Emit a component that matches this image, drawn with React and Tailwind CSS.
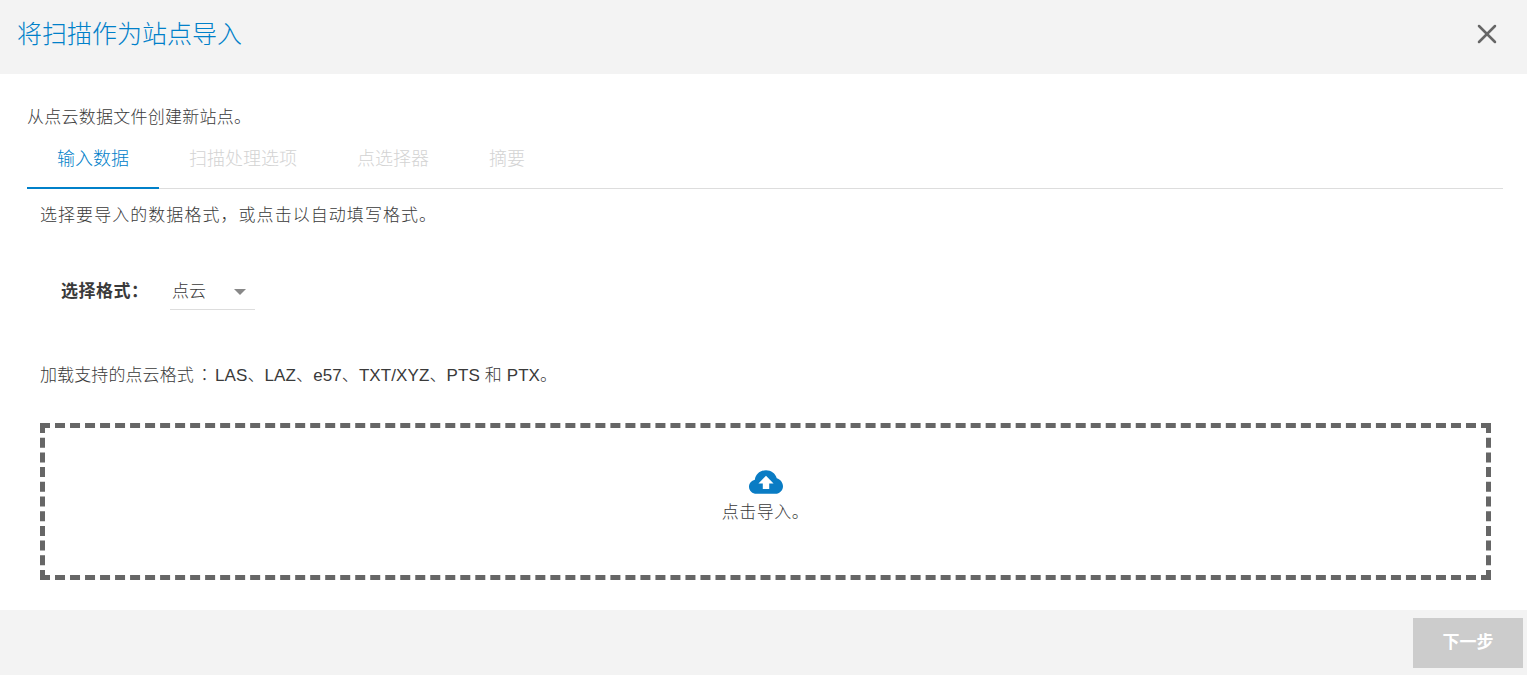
import { X } from 'lucide-react'

const FONT = "font-['Liberation_Sans','Noto_Sans_CJK_SC',sans-serif]"

function Tabs() {
  const tabs = ['输入数据', '扫描处理选项', '点选择器', '摘要']
  return (
    <div className="mt-[7px] flex border-b border-[#dddddd] h-[52px]">
      {tabs.map((t, i) => (
        <div
          key={t}
          className={`px-[30px] pt-[10px] text-[18px] leading-[25px] h-[52px] font-light ${i === 0 ? 'text-[#0080c9] border-b-2 border-[#0080c9]' : 'text-[#d3d3d3]'}`}
        >
          {t}
        </div>
      ))}
    </div>
  )
}

function CloudIcon() {
  return (
    <svg width="34" height="24" viewBox="0 0 36 25">
      <path
        fill="#0a7cc4"
        d="M8 25C3.600 25 0 21.600 0 17.400 0 13.800 2.600 10.800 6.200 10 7 4.400 11.800 0 18 0c5.400 0 10 3.400 11.400 8.400C33.200 9.400 36 13 36 17c0 4.400-3.600 8-8 8z"
      />
      <path fill="#ffffff" d="M18 6l8 8h-4.600v6h-6.800v-6H10z" />
    </svg>
  )
}

export default function App() {
  return (
    <div className={`h-[675px] flex flex-col bg-white text-[#3a3a3a] ${FONT}`}>
      <header className="h-[74px] shrink-0 bg-[#f3f3f3] flex items-center justify-between pl-[17px] pr-[24px] pb-[7px]">
        <h1 className="text-[25px] leading-[34px] text-[#0080c9] font-light">将扫描作为站点导入</h1>
        <X size={32} strokeWidth={1.9} className="text-[#666666]" />
      </header>

      <main className="flex-1 pl-[27px] pr-[24px]">
        <p className="mt-[32px] text-[17px] leading-[24px] tracking-[0.25px] font-light">从点云数据文件创建新站点。</p>
        <Tabs />
        <div className="pl-[13px] pr-[12px]">
          <p className="mt-[15px] text-[17px] leading-[24px] tracking-[1.05px] font-light">选择要导入的数据格式，或点击以自动填写格式。</p>

          <div className="mt-[46px] ml-[21px] flex items-start">
            <span className="text-[17px] leading-[36px] font-bold tracking-[0.5px] w-[109px]">选择格式：</span>
            <div className="w-[85px] h-[36px] border-b border-[#dddddd] flex items-center justify-between pl-[2px] pr-[9px]">
              <span className="text-[17px] font-light">点云</span>
              <span className="w-0 h-0 border-x-[6px] border-x-transparent border-t-[6px] border-t-[#888888]" />
            </div>
          </div>

          <p className="mt-[52px] text-[17px] leading-[24px] tracking-[0.1px] font-light">
            加载支持的点云格式<span className="ml-[2px] mr-[2px] font-['Noto_Sans_CJK_TC',sans-serif]">：</span>LAS、LAZ、e57、TXT/XYZ、PTS 和 PTX。
          </p>

          <div className="mt-[35px] h-[157px] border-[5px] border-dashed border-[#666666] flex flex-col items-center pt-[42px]">
            <CloudIcon />
            <span className="mt-[7px] text-[17px] leading-[24px] tracking-[0.5px] font-light">点击导入。</span>
          </div>
        </div>
      </main>

      <footer className="h-[65px] shrink-0 bg-[#f3f3f3] flex items-start justify-end pt-[8px] pr-[4px]">
        <button className="w-[110px] h-[50px] bg-[#cccccc] text-white font-bold text-[17px]">下一步</button>
      </footer>
    </div>
  )
}
